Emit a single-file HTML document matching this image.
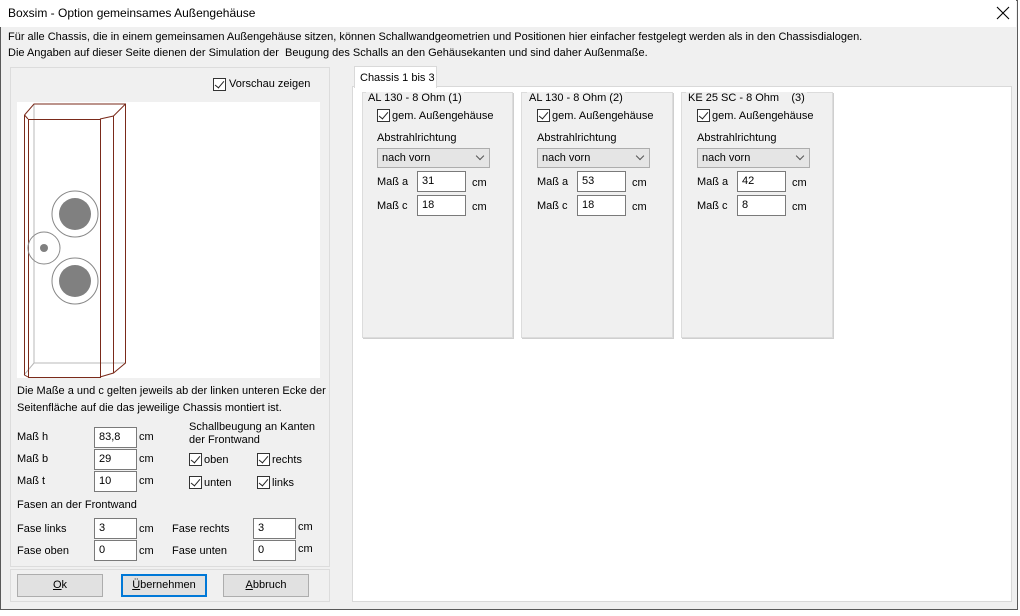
<!DOCTYPE html>
<html><head><meta charset="utf-8"><style>
*{box-sizing:border-box;margin:0;padding:0}
body{width:1020px;height:616px;background:#fff;font-family:"Liberation Sans",sans-serif;font-size:11px;color:#000;position:relative;overflow:hidden}
.a{position:absolute;white-space:nowrap}
.win{position:absolute;left:0;top:0;width:1018px;height:610px;border:1px solid #5a5a5a;background:#f0f0f0}
.title{position:absolute;left:0;top:0;width:1016px;height:27px;background:#fff}
.inp{position:absolute;background:#fff;border:1px solid #7a7a7a;padding:3px 0 0 4px;height:21px}
.cb{position:absolute;width:13px;height:13px;border:1px solid #333;background:#fff}
.cb:after{content:"";position:absolute;left:3px;top:0px;width:4px;height:8px;border-right:1.3px solid #222;border-bottom:1.3px solid #222;transform:rotate(40deg)}
.grp{position:absolute;background:#f0f0f0;border:1px solid #dcdcdc;box-shadow:1px 1px 0 #cfcfcf}
.sel{position:absolute;background:#e5e5e5;border:1px solid #adadad;height:20px;padding:3px 0 0 4px}
.sel:after{content:"";position:absolute;right:6px;top:4px;width:5px;height:5px;border-right:1px solid #555;border-bottom:1px solid #555;transform:rotate(45deg)}
.btn{position:absolute;background:#e1e1e1;border:1px solid #adadad;height:23px;text-align:center;padding-top:4px}
</style></head><body>
<div class="win"></div>
<div class="title"></div>
<div class="a" style="left:8px;top:6px;font-size:12px">Boxsim - Option gemeinsames Außengehäuse</div>
<svg class="a" style="left:996px;top:6px" width="14" height="14"><path d="M1 1L13 13M13 1L1 13" stroke="#000" stroke-width="1.1"/></svg>
<div class="a" style="left:8px;top:31px">Für alle Chassis, die in einem gemeinsamen Außengehäuse sitzen, können Schallwandgeometrien und Positionen hier einfacher festgelegt werden als in den Chassisdialogen.</div>
<div class="a" style="left:8px;top:47px">Die Angaben auf dieser Seite dienen der Simulation der&nbsp; Beugung des Schalls an den Gehäusekanten und sind daher Außenmaße.</div>

<div class="a" style="left:10px;top:67px;width:320px;height:500px;border:1px solid #dcdcdc"></div>
<div class="cb" style="left:213px;top:78px"></div>
<div class="a" style="left:229px;top:78px">Vorschau zeigen</div>
<svg class="a" style="left:17px;top:102px" width="303" height="276" viewBox="17 102 303 276">
<rect x="17" y="102" width="303" height="276" fill="#fff"/>
<g stroke="#b8b8b8" fill="none" stroke-width="1"><path d="M34 104V363H125M24 375L34 363"/></g>
<g stroke="#7a2a1a" fill="none" stroke-width="1">
<rect x="28.5" y="119.5" width="72" height="258"/>
<path d="M24.5 115V375L28 377M24.5 115L34 104H125.5V363L113.5 373L100 377M125.5 104L113.5 116L100 119M113.5 116V373M24.5 115L28 119"/>
</g>
<g stroke="#888" fill="none"><circle cx="75" cy="214" r="23"/><circle cx="75" cy="281" r="23"/><circle cx="44" cy="248" r="16"/></g>
<g fill="#808080"><circle cx="75" cy="214" r="16"/><circle cx="75" cy="281" r="16"/><circle cx="44" cy="248" r="4"/></g>
</svg>
<div class="a" style="left:17px;top:385px">Die Maße a und c gelten jeweils ab der linken unteren Ecke der</div>
<div class="a" style="left:17px;top:402px">Seitenfläche auf die das jeweilige Chassis montiert ist.</div>
<div class="a" style="left:17px;top:431px">Maß h</div><div class="inp" style="left:94px;top:427px;width:43px">83,8</div><div class="a" style="left:139px;top:431px">cm</div>
<div class="a" style="left:17px;top:453px">Maß b</div><div class="inp" style="left:94px;top:449px;width:43px">29</div><div class="a" style="left:139px;top:453px">cm</div>
<div class="a" style="left:17px;top:475px">Maß t</div><div class="inp" style="left:94px;top:471px;width:43px">10</div><div class="a" style="left:139px;top:475px">cm</div>
<div class="a" style="left:189px;top:421px">Schallbeugung an Kanten</div>
<div class="a" style="left:189px;top:434px">der Frontwand</div>
<div class="cb" style="left:189px;top:453px"></div><div class="a" style="left:204px;top:454px">oben</div>
<div class="cb" style="left:257px;top:453px"></div><div class="a" style="left:272px;top:454px">rechts</div>
<div class="cb" style="left:189px;top:476px"></div><div class="a" style="left:204px;top:477px">unten</div>
<div class="cb" style="left:257px;top:476px"></div><div class="a" style="left:272px;top:477px">links</div>
<div class="a" style="left:17px;top:499px">Fasen an der Frontwand</div>
<div class="a" style="left:17px;top:523px">Fase links</div><div class="inp" style="left:94px;top:518px;width:43px">3</div><div class="a" style="left:139px;top:523px">cm</div>
<div class="a" style="left:172px;top:523px">Fase rechts</div><div class="inp" style="left:253px;top:518px;width:43px">3</div><div class="a" style="left:298px;top:521px">cm</div>
<div class="a" style="left:17px;top:545px">Fase oben</div><div class="inp" style="left:94px;top:540px;width:43px">0</div><div class="a" style="left:139px;top:545px">cm</div>
<div class="a" style="left:172px;top:545px">Fase unten</div><div class="inp" style="left:253px;top:540px;width:43px">0</div><div class="a" style="left:298px;top:543px">cm</div>
<div class="a" style="left:10px;top:569px;width:320px;height:33px;border:1px solid #dcdcdc"></div>
<div class="btn" style="left:17px;top:574px;width:86px"><u>O</u>k</div>
<div class="btn" style="left:121px;top:574px;width:86px;border:2px solid #0078d7;padding-top:3px"><u>Ü</u>bernehmen</div>
<div class="btn" style="left:223px;top:574px;width:86px"><u>A</u>bbruch</div>

<div class="a" style="left:352px;top:86px;width:660px;height:516px;background:#fff;border:1px solid #d9d9d9"></div>
<div class="a" style="left:354px;top:66px;width:83px;height:22px;background:#fff;border:1px solid #d9d9d9;border-bottom:none;padding:5px 0 0 5px">Chassis 1 bis 3</div>

<div class="grp" style="left:362px;top:92px;width:151px;height:246px"></div>
<div class="a" style="left:366px;top:92px;background:#f0f0f0;padding:0 2px">AL 130 - 8 Ohm (1)</div>
<div class="cb" style="left:377px;top:109px"></div><div class="a" style="left:392px;top:110px">gem. Außengehäuse</div>
<div class="a" style="left:377px;top:132px">Abstrahlrichtung</div>
<div class="sel" style="left:377px;top:148px;width:113px">nach vorn</div>
<div class="a" style="left:377px;top:176px">Maß a</div><div class="inp" style="left:417px;top:171px;width:49px">31</div><div class="a" style="left:472px;top:177px">cm</div>
<div class="a" style="left:377px;top:200px">Maß c</div><div class="inp" style="left:417px;top:195px;width:49px">18</div><div class="a" style="left:472px;top:201px">cm</div>

<div class="grp" style="left:521px;top:92px;width:152px;height:246px"></div>
<div class="a" style="left:527px;top:92px;background:#f0f0f0;padding:0 2px">AL 130 - 8 Ohm (2)</div>
<div class="cb" style="left:537px;top:109px"></div><div class="a" style="left:552px;top:110px">gem. Außengehäuse</div>
<div class="a" style="left:537px;top:132px">Abstrahlrichtung</div>
<div class="sel" style="left:537px;top:148px;width:113px">nach vorn</div>
<div class="a" style="left:537px;top:176px">Maß a</div><div class="inp" style="left:577px;top:171px;width:49px">53</div><div class="a" style="left:632px;top:177px">cm</div>
<div class="a" style="left:537px;top:200px">Maß c</div><div class="inp" style="left:577px;top:195px;width:49px">18</div><div class="a" style="left:632px;top:201px">cm</div>

<div class="grp" style="left:681px;top:92px;width:152px;height:246px"></div>
<div class="a" style="left:686px;top:92px;background:#f0f0f0;padding:0 2px">KE 25 SC - 8 Ohm&nbsp;&nbsp;&nbsp; (3)</div>
<div class="cb" style="left:697px;top:109px"></div><div class="a" style="left:712px;top:110px">gem. Außengehäuse</div>
<div class="a" style="left:697px;top:132px">Abstrahlrichtung</div>
<div class="sel" style="left:697px;top:148px;width:113px">nach vorn</div>
<div class="a" style="left:697px;top:176px">Maß a</div><div class="inp" style="left:737px;top:171px;width:49px">42</div><div class="a" style="left:792px;top:177px">cm</div>
<div class="a" style="left:697px;top:200px">Maß c</div><div class="inp" style="left:737px;top:195px;width:49px">8</div><div class="a" style="left:792px;top:201px">cm</div>
</body></html>
